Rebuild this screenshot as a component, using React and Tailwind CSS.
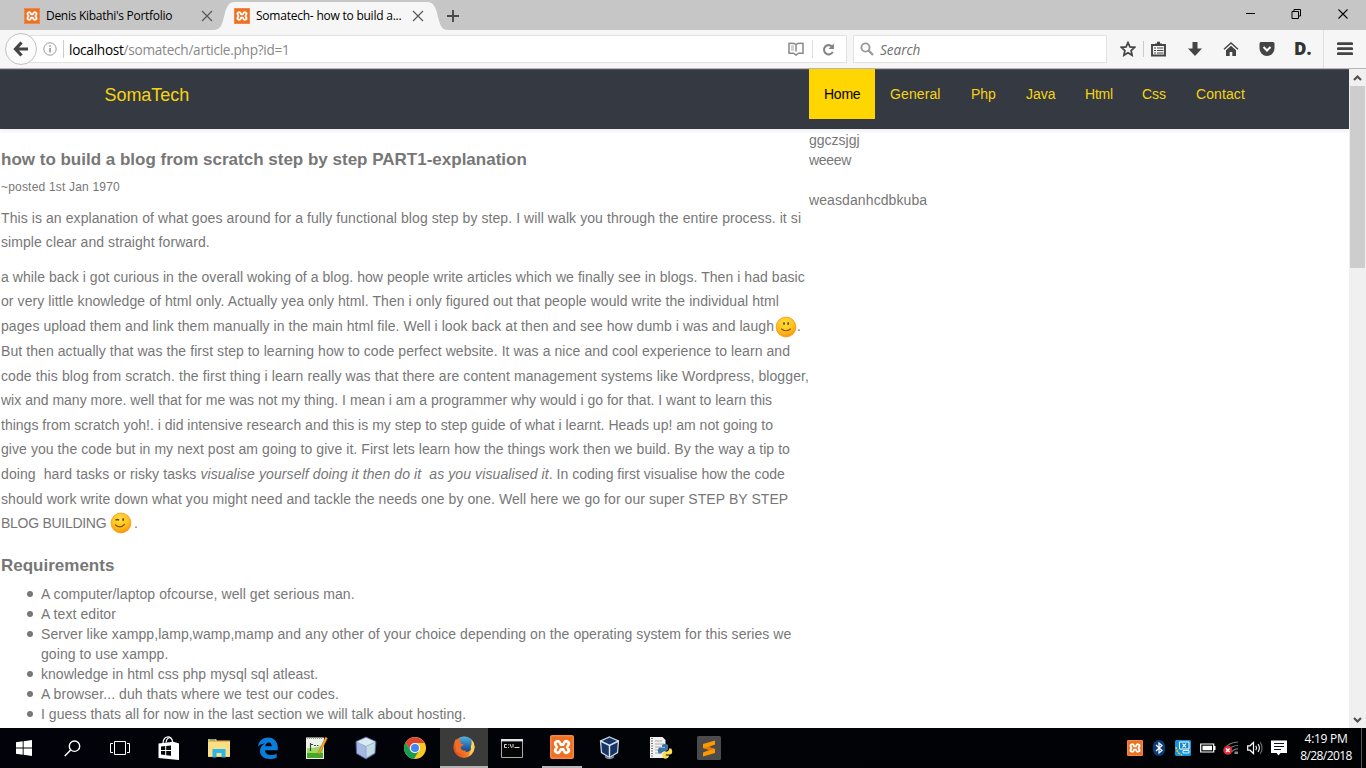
import React from "react";

const PAGE = "font-['Liberation_Sans',Arial,sans-serif]";
const UI = "font-['Open_Sans','Noto_Sans',sans-serif]";

function Xampp({ size = 16 }) {
  return (
    <svg width={size} height={size} viewBox="0 0 24 24" className="shrink-0">
      <rect width="24" height="24" rx="2" fill="#ee7023" />
      <rect x="0.8" y="0.8" width="22.4" height="22.4" rx="1.5" fill="none" stroke="#f59a5c" strokeWidth="0.9" />
      <path
        d="M7.600 8.700L9.500 12L7.600 15.300M16.400 8.700L14.500 12L16.400 15.300M9.500 12h5"
        fill="none"
        stroke="#fff"
        strokeWidth="7.400"
        strokeLinecap="round"
        strokeLinejoin="round"
      />
      <path
        d="M7.700 8.700L9.500 12L7.700 15.300M16.300 8.700L14.500 12L16.300 15.300M9.500 12h5"
        fill="none"
        stroke="#ee7023"
        strokeWidth="2.100"
        strokeLinecap="round"
        strokeLinejoin="round"
      />
    </svg>
  );
}

function TabClose() {
  return (
    <svg width="12" height="12" viewBox="0 0 12 12" className="shrink-0">
      <path d="M1 1l10 10M11 1L1 11" stroke="#5a5a5a" strokeWidth="1.3" />
    </svg>
  );
}

function TabStrip() {
  return (
    <div className={`flex h-[30px] shrink-0 items-center bg-[#c6c6c6] text-[12px] text-black ${UI}`}>
      <div className="flex h-full w-[213px] items-center pt-[2px] pl-[24px]">
        <Xampp />
        <span className="ml-[6px] w-[156px] tracking-[-0.29px] whitespace-nowrap">Denis Kibathi's Portfolio</span>
        <TabClose />
      </div>
      <div className="relative flex h-full w-[235px] items-center pt-[2px] pl-[21px]">
        <svg width="235" height="30" viewBox="0 0 235 30" className="absolute top-0 left-0">
          <path d="M0 30C8 30 9 24 11 17C13 8 15 2 22 2H214C221 2 223 8 225 17C227 24 228 30 235 30Z" fill="#f6f6f6" />
        </svg>
        <div className="relative flex items-center">
          <Xampp />
          <span className="ml-[6px] w-[156px] tracking-[-0.23px] whitespace-nowrap">Somatech- how to build a...</span>
          <TabClose />
        </div>
      </div>
      <svg width="12" height="12" viewBox="0 0 12 12" className="mt-[2px] ml-[-1px]">
        <path d="M6 0v12M0 6h12" stroke="#4a4a4a" strokeWidth="1.900" />
      </svg>
      <div className="mr-[17px] ml-auto flex items-center gap-[36px] pb-[2px]">
        <svg width="10" height="12" viewBox="0 0 10 12">
          <path d="M1 5.500h9" stroke="#000" />
        </svg>
        <svg width="10" height="12" viewBox="0 0 10 12">
          <path d="M3 3.500v-2h6.500v6.500h-2M1 3.500h6.500v7H1z" fill="none" stroke="#000" />
        </svg>
        <svg width="12" height="12" viewBox="0 0 12 12">
          <path d="M1.500 1.500l9 9M10.500 1.500l-9 9" stroke="#000" strokeWidth="1.1" />
        </svg>
      </div>
    </div>
  );
}

function Toolbar() {
  return (
    <div className={`flex h-[39px] shrink-0 items-center border-b border-[#b6b6b8] bg-[#f6f6f6] ${UI}`}>
      <div className="relative ml-[24px] flex h-[28px] w-[823px] shrink-0 items-center border border-[#e2e2e2] bg-white">
        <div className="absolute top-[-3px] left-[-20px] flex h-[32px] w-[32px] items-center justify-center rounded-full border border-[#c3c3c3] bg-[#fbfbfb]">
          <svg width="16" height="16" viewBox="0 0 16 16">
            <path d="M8.500 1.500L2.500 8l6 6.500M3 8h12" fill="none" stroke="#444" strokeWidth="3.200" />
          </svg>
        </div>
        <svg width="14" height="14" viewBox="0 0 14 14" className="ml-[18px]">
          <circle cx="7" cy="7" r="6.200" fill="none" stroke="#999" />
          <path d="M7 6v4.500M7 3.300v1.400" stroke="#888" strokeWidth="1.400" />
        </svg>
        <div className="ml-[6px] h-[18px] w-px bg-[#ccc]" />
        <span className="mt-[2px] ml-[5px] text-[13.6px] tracking-[-0.26px] whitespace-nowrap text-[#888]">
          <span className="text-black">localhost</span>/somatech/article.php?id=1
        </span>
        <svg width="16" height="14" viewBox="0 0 16 14" className="ml-auto">
          <path d="M8 2.500C6 1 3.500 1 1 1.400v9.800h4.500L8 13l2.500-1.800H15V1.400C12.500 1 10 1 8 2.500zM8 2.500V9.500" fill="none" stroke="#888" strokeWidth="1.500" />
          <path d="M3 4h3M3 6h3M3 8h3" stroke="#999" strokeWidth="0.900" />
        </svg>
        <div className="mx-[8px] h-[18px] w-px bg-[#ddd]" />
        <svg width="13" height="13" viewBox="0 0 12 12" className="mr-[11px] ml-px">
          <path d="M9.300 3.300A4.300 4.300 0 1 0 10 8.200" fill="none" stroke="#848484" strokeWidth="1.900" />
          <path d="M11 0.500v5H6z" fill="#848484" />
        </svg>
      </div>
      <div className="ml-[6px] flex h-[28px] w-[254px] shrink-0 items-center border border-[#e2e2e2] bg-white pl-[6px]">
        <svg width="14" height="14" viewBox="0 0 14 14">
          <circle cx="5.500" cy="5.500" r="4.100" fill="none" stroke="#999" strokeWidth="1.900" />
          <path d="M8.500 8.500l4.500 4.500" stroke="#999" strokeWidth="2.300" />
        </svg>
        <span className="mt-[2px] ml-[6px] text-[13.6px] tracking-[-0.05px] text-[#6e6e6e] italic">Search</span>
      </div>
      <div className="ml-[13px] flex items-center">
        <svg width="16" height="16" viewBox="0 0 16 16">
          <path d="M8 1.500l1.900 4.400 4.700.4-3.500 3.200 1 4.800L8 11.800l-4.100 2.500 1-4.800L1.400 6.300l4.700-.4z" fill="none" stroke="#444" strokeWidth="1.700" />
        </svg>
        <div className="mr-[7px] ml-[7px] h-[16px] w-px bg-[#ccc]" />
        <svg width="15" height="16" viewBox="0 0 15 16">
          <path d="M1 4h13v10.500H1z" fill="none" stroke="#444" strokeWidth="1.900" />
          <path d="M4 4V2.500h2V0.800h3v1.700h2V4z" fill="#444" />
          <path d="M3 7h2M6 7h6.500M3 9.500h2M6 9.500h6.500M3 12h2M6 12h6.500" stroke="#444" strokeWidth="1.200" />
        </svg>
        <svg width="14" height="14" viewBox="0 0 14 14" className="ml-[22px]">
          <path d="M4.500 0h5v6.500H14L7 14 0 6.500h4.500z" fill="#444" />
        </svg>
        <svg width="16" height="16" viewBox="0 0 16 16" className="ml-[21px]">
          <path d="M1 8.300L8 2l7 6.300" fill="none" stroke="#444" strokeWidth="1.400" />
          <path d="M3 9.200L8 4.800l5 4.400V15H9.300v-4H6.700v4H3z" fill="#444" />
        </svg>
        <svg width="16" height="14" viewBox="0 0 15 14" className="ml-[20px]">
          <path d="M1.500 0h12A1.500 1.500 0 0 1 15 1.500V6.500a7.500 7.500 0 0 1-15 0V1.500A1.500 1.500 0 0 1 1.500 0z" fill="#444" />
          <path d="M4 5l3.500 3.500L11 5" fill="none" stroke="#fff" strokeWidth="2" />
        </svg>
        <span className="ml-[19px] w-[17px] text-[17px] leading-[16px] font-extrabold text-[#333]">D.</span>
      </div>
      <div className="ml-[12px] h-full w-px bg-[#e0e0e0]" />
      <svg width="16" height="14" viewBox="0 0 16 14" className="ml-[13px]">
        <path d="M1.200 1.700h13.600M1.200 6.700h13.600M1.200 11.700h13.600" stroke="#444" strokeWidth="2.700" strokeLinecap="round" />
      </svg>
    </div>
  );
}

function Smile({ wink = false }) {
  return (
    <svg width="22" height="22" viewBox="0 0 22 22" className="inline-block shrink-0">
      <defs>
        <radialGradient id={wink ? "faceWink" : "faceSmile"} cx="45%" cy="30%" r="70%">
          <stop offset="0" stopColor="#ffde42" />
          <stop offset="0.6" stopColor="#ffc21c" />
          <stop offset="1" stopColor="#f7960a" />
        </radialGradient>
      </defs>
      <circle cx="11" cy="11" r="9.900" fill={wink ? "url(#faceWink)" : "url(#faceSmile)"} stroke="#f99c1c" strokeWidth="0.900" />
      {wink ? (
        <path d="M5.500 8.300q1.800-1.600 3.600 0" fill="none" stroke="#6b4208" strokeWidth="1.300" />
      ) : (
        <ellipse cx="9" cy="7.500" rx="0.900" ry="1.600" fill="#6b4208" />
      )}
      <ellipse cx="13.200" cy="7.500" rx="0.900" ry="1.600" fill="#6b4208" />
      <path d={wink ? "M5.500 13q4.500 4 9-0.500" : "M6.500 13q4.500 3.500 9 0"} fill="none" stroke="#8a5208" strokeWidth="1.200" strokeLinecap="round" />
    </svg>
  );
}

const links = [
  ["Home", "w-[66px] bg-[#ffd600] text-black tracking-[-0.25px]"],
  ["General", "w-[81px] tracking-[0.1px]"],
  ["Php", "w-[55px]"],
  ["Java", "w-[59px]"],
  ["Html", "w-[57px] tracking-[-0.2px]"],
  ["Css", "w-[54px]"],
  ["Contact", "w-[80px] tracking-[0.1px]"],
];

function SiteNav() {
  return (
    <nav className="relative flex h-[60px] shrink-0 border-t border-[#50545a] bg-[#353941] text-[#f5d413] shadow-[0_3px_3px_#f3f3f3]">
      <div className="w-[809px] pt-[15px] pl-[104.500px] text-[18px] leading-[20px] tracking-[-0.05px]">SomaTech</div>
      <div className="-mt-px flex text-[14px] leading-[50px]">
        {links.map(([label, cls]) => (
          <a key={label} className={`block h-[50px] pl-[15px] whitespace-nowrap ${cls}`}>
            {label}
          </a>
        ))}
      </div>
    </nav>
  );
}

function Line({ children, track = "" }) {
  return <span className={`block h-[24.600px] whitespace-pre ${track}`}>{children}</span>;
}

function Item({ children, track = "" }) {
  return (
    <li className={`flex before:mt-[7px] before:mr-[8px] before:block before:h-[6px] before:w-[6px] before:shrink-0 before:rounded-full before:bg-[#777] ${track}`}>
      <span>{children}</span>
    </li>
  );
}

function Article() {
  return (
    <article className="w-[809px] shrink-0 pl-px">
      <h2 className="mt-[21px] text-[17px] leading-[20px] font-bold">how to build a blog from scratch step by step PART1-explanation</h2>
      <p className="mt-[7px] text-[12px] leading-[20px] tracking-[0.19px]">~posted 1st Jan 1970</p>
      <p className="mt-[8.700px] leading-[24.600px]">
        <Line track="tracking-[0.082px]">This is an explanation of what goes around for a fully functional blog step by step. I will walk you through the entire process. it si</Line>
        <Line track="tracking-[0.075px]">simple clear and straight forward.</Line>
      </p>
      <p className="mt-[9.900px] leading-[24.600px]">
        <Line track="tracking-[0.06px]">a while back i got curious in the overall woking of a blog. how people write articles which we finally see in blogs. Then i had basic</Line>
        <Line track="tracking-[0.074px]">or very little knowledge of html only. Actually yea only html. Then i only figured out that people would write the individual html</Line>
        <Line track="tracking-[0.062px]">
          pages upload them and link them manually in the main html file. Well i look back at then and see how dumb i was and laugh
          <span className="ml-px inline-flex h-[22px] align-[-7px]"><Smile /></span>.
        </Line>
        <Line track="tracking-[0.078px]">But then actually that was the first step to learning how to code perfect website. It was a nice and cool experience to learn and</Line>
      </p>
      <p className="mt-[0.400px] leading-[24.500px]">
        <Line track="tracking-[0.1px]">code this blog from scratch. the first thing i learn really was that there are content management systems like Wordpress, blogger,</Line>
        <Line track="tracking-[0.006px]">wix and many more. well that for me was not my thing. I mean i am a programmer why would i go for that. I want to learn this</Line>
        <Line track="tracking-[0.012px]">things from scratch yoh!. i did intensive research and this is my step to step guide of what i learnt. Heads up! am not going to</Line>
        <Line track="tracking-[0.065px]">give you the code but in my next post am going to give it. First lets learn how the things work then we build. By the way a tip to</Line>
        <Line track="tracking-[0.1px]">
          {"doing  hard tasks or risky tasks "}
          <em>{"visualise yourself doing it then do it  as you visualised it"}</em>
          <span className="tracking-[0.005px]">{". In coding first visualise how the code"}</span>
        </Line>
        <Line track="tracking-[0.07px]">should work write down what you might need and tackle the needs one by one. Well here we go for our super STEP BY STEP</Line>
        <Line track="tracking-[-0.28px]">
          {"BLOG BUILDING "}
          <span className="mr-[2px] inline-flex h-[22px] align-[-6px]"><Smile wink /></span>.
        </Line>
      </p>
      <h2 className="mt-[20px] text-[17px] leading-[20px] font-bold">Requirements</h2>
      <ul className="mt-[8px] pl-[26px] leading-[20px] whitespace-nowrap">
        <Item track="tracking-[0.08px]">A computer/laptop ofcourse, well get serious man.</Item>
        <Item track="tracking-[0.08px]">A text editor</Item>
        <Item track="tracking-[0.07px]">
          Server like xampp,lamp,wamp,mamp and any other of your choice depending on the operating system for this series we
          <br />
          going to use xampp.
        </Item>
        <Item track="tracking-[0.04px]">knowledge in html css php mysql sql atleast.</Item>
        <Item track="tracking-[0.08px]">A browser... duh thats where we test our codes.</Item>
        <Item track="tracking-[0.045px]">I guess thats all for now in the last section we will talk about hosting.</Item>
      </ul>
    </article>
  );
}

function Scrollbar() {
  return (
    <div className="flex w-[17px] shrink-0 flex-col items-center bg-[#f0f0f0]">
      <svg width="17" height="17" viewBox="0 0 17 17" className="shrink-0">
        <path d="M5 11L8.500 7.500l3.500 3.500" fill="none" stroke="#505050" strokeWidth="2.200" />
      </svg>
      <div className="h-[182px] w-[15px] bg-[#cdcdcd]" />
      <svg width="17" height="17" viewBox="0 0 17 17" className="mt-auto">
        <path d="M5 7L8.500 10.500l3.500-3.500" fill="none" stroke="#505050" strokeWidth="2.200" />
      </svg>
    </div>
  );
}

function Slot({ children, w = "w-[49px]" }) {
  return <div className={`flex h-full shrink-0 items-center justify-center ${w}`}>{children}</div>;
}

function Taskbar() {
  return (
    <div className={`flex h-[40px] shrink-0 bg-linear-to-r from-[#02030a] via-[#020307] to-[#010204] text-white ${UI}`}>
      <Slot w="w-[48px]">
        <svg width="16" height="16" viewBox="0 0 16 16">
          <path d="M0 2.300L6.700 1.300v6.300H0zM7.600 1.200L16 0v7.600H7.600zM0 8.500h6.700v6.200L0 13.800zM7.600 8.500H16V16l-8.400-1.200z" fill="#fff" />
        </svg>
      </Slot>
      <Slot w="w-[48px]">
        <svg width="17" height="17" viewBox="0 0 17 17">
          <circle cx="10.500" cy="6.200" r="5.200" fill="none" stroke="#fff" strokeWidth="1.400" />
          <path d="M6.700 10L0.700 16" stroke="#fff" strokeWidth="1.500" />
        </svg>
      </Slot>
      <Slot w="w-[48px]">
        <svg width="20" height="14" viewBox="0 0 20 14">
          <path d="M4.500 0.500h11v13h-11zM3 2.500H0.500v9H3M17 2.500h2.500v9H17" fill="none" stroke="#fff" />
        </svg>
      </Slot>
      <Slot w="w-[50px]">
        <svg width="22" height="24" viewBox="0 0 22 24">
          <path d="M0.500 7.500l15-1.800 5.500 1.800V24L15.500 23.500 0.500 22z" fill="#fff" />
          <path d="M5 7.200C5 2.500 8 0.800 10 0.800s4.500 1.500 4.500 5.200M8 6.500C8.500 2.500 11 1 12.500 2c1.800 1.200 2 2.500 2 4" fill="none" stroke="#fff" strokeWidth="1.200" />
          <path d="M3 10.500l4.200-.4v3.900H3zM8.200 10l4.800-.5V14H8.200zM3 15h4.200v4L3 18.500zM8.200 15H13v4.700l-4.800-.5z" fill="#05070c" />
        </svg>
      </Slot>
      <Slot>
        <svg width="22" height="20" viewBox="0 0 22 20">
          <path d="M0 1h8l1 1.500h13v16.500H0z" fill="#e9b949" />
          <path d="M0 4h22v14.500H0z" fill="#fbdf86" />
          <path d="M2 1.200h5v1.300H2z" fill="#3b9ad9" />
          <path d="M4.500 11h13v8.500h-4V15h-5v4.500h-4z" fill="#29b6ea" />
        </svg>
      </Slot>
      <Slot>
        <svg width="20" height="22" viewBox="0 0 20 22">
          <path d="M0 9.500C.7 4 4.500.5 10 .5c6.200 0 9.800 4.500 9.800 10v2.700H7c.2 3.500 3 4.800 6 4.800 2.200 0 4.200-.6 5.700-1.600v4.100c-1.700 1-4 1.500-6.700 1.500C5.500 22 2 18.500 2 14c0-3.300 1.800-6.200 5-7.500C4.500 6.500 2 7.500 0 9.500zm7.200-.2h6.600c0-2.500-1.300-3.800-3.200-3.800-1.800 0-3 1.500-3.400 3.800z" fill="#0a7ddb" />
        </svg>
      </Slot>
      <Slot>
        <svg width="23" height="24" viewBox="0 0 23 24">
          <path d="M1 1.500h18v21.500H1z" fill="#eef3e8" />
          <path d="M2 12q8 1 16-3v13H2z" fill="#9ed860" />
          <path d="M2 17h16v5H2z" fill="#46a827" />
          <path d="M2 2.200h16" stroke="#999" strokeWidth="1.500" strokeDasharray="1 1" />
          <path d="M5.500 7v8M5.500 8.500h2.500M9 9.500h2M12 9.500h1.500" fill="none" stroke="#444" strokeWidth="1.200" />
          <path d="M20.500 1l2 1.300-7.500 15-2 1.500.300-2.600z" fill="#f3a92c" stroke="#a65d1e" strokeWidth="0.500" />
        </svg>
      </Slot>
      <Slot>
        <svg width="22" height="24" viewBox="0 0 22 24">
          <path d="M11 1l10 4.500-1 12L11 23 1.500 17.500 1 5.500z" fill="#8fa9d0" stroke="#5663a0" strokeWidth="0.800" />
          <path d="M11 1.800L20 5.700 11 10 2 5.700z" fill="#d9ecf0" />
          <path d="M2 6.500l8.500 4v11L2.500 17z" fill="#a6b9e3" />
          <path d="M20 6.500l-8.500 4v11l7.800-4.800z" fill="#c2dde0" />
        </svg>
      </Slot>
      <Slot>
        <svg width="22" height="22" viewBox="0 0 22 22">
          <circle cx="11" cy="11" r="11" fill="#fbc81e" />
          <path d="M1.500 5.500A11 11 0 0 1 20.500 6H11a5 5 0 0 0-4.600 7z" fill="#dd4437" />
          <path d="M1.500 5.500A11 11 0 0 0 10 22l5-8.500a5 5 0 0 1-8.600 0z" fill="#179c58" />
          <circle cx="11" cy="11" r="5.100" fill="#fff" />
          <circle cx="11" cy="11" r="4" fill="#4285f4" />
        </svg>
      </Slot>
      <div className="ml-px flex h-full w-[48px] shrink-0 items-center justify-center border-b-2 border-[#b5b5b5] bg-[#3b3b3b]">
        <svg width="22" height="22" viewBox="0 0 22 22">
          <defs>
            <linearGradient id="foxTail" x1="0" y1="0.700" x2="1" y2="0.300">
              <stop offset="0" stopColor="#e2491b" />
              <stop offset="0.600" stopColor="#f5872a" />
              <stop offset="1" stopColor="#ffd95a" />
            </linearGradient>
            <linearGradient id="foxGlobe" x1="0.500" y1="0" x2="0.500" y2="1">
              <stop offset="0" stopColor="#4fb3e2" />
              <stop offset="1" stopColor="#143f86" />
            </linearGradient>
          </defs>
          <circle cx="11" cy="11.300" r="10.600" fill="url(#foxTail)" />
          <path d="M7 1.500c4-2 9-.800 11.500 2.500 1.500 4 1 8.500-2 11-3 2-7 1-8.500-1.500L5 7z" fill="url(#foxGlobe)" />
          <path d="M1.500 6C2 4.500 2.500 3.500 3.500 2.500c0 1.200.300 2 1 2.500 1-.600 2-.700 3.200-.300-.600.900-.700 1.900 0 2.800 1.200.400 2.300.300 2.800.900-.500 1.600-2.500 1.500-3 3 .500 2.500 3 3.700 6 3l-3 3.500-7-2z" fill="#ef6f26" />
          <path d="M18.500 3.500c3.500 4 3.600 8.500 1.700 12-1.200 2-2.700 3.500-4.700 4.700 2.500-4.200 2.700-7 2.300-9.500.9-2.500 1.200-5 .7-7.200z" fill="#ffd052" />
        </svg>
      </div>
      <Slot w="w-[48px]">
        <svg width="22" height="19" viewBox="0 0 22 19">
          <path d="M0.500 0.500h21v18h-21z" fill="#050505" stroke="#aaa" />
          <path d="M0 1.200h22" stroke="#dfe6ea" strokeWidth="2.400" />
          <path d="M5.800 5.500H3.500V8.500h2.300M7.500 5.500v.8M7.500 8v.8M9 5l1.500 3.800M12 5v3.500M13.500 8.500h5" fill="none" stroke="#ddd" strokeWidth="1" />
        </svg>
      </Slot>
      <div className="ml-px flex h-full w-[49px] justify-center">
        <div className="flex w-[40px] items-center justify-center border-b-2 border-[#b5b5b5]">
          <Xampp size={24} />
        </div>
      </div>
      <Slot w="w-[47px]">
        <svg width="21" height="24" viewBox="0 0 21 24">
          <path d="M10.500 1l9 4-1 11.500-8 5-8-5L1.500 5z" fill="#163564" stroke="#c9d6e6" strokeWidth="1.300" />
          <path d="M1.500 5l9 4.500 9-4.500M10.500 9.500v11.500" fill="none" stroke="#dfe8f2" strokeWidth="1.400" />
          <path d="M6 20.500q4.500 4 9 0" fill="none" stroke="#8194b4" strokeWidth="1.500" />
        </svg>
      </Slot>
      <Slot w="w-[55px]">
        <svg width="24" height="24" viewBox="0 0 24 24">
          <path d="M1 1h12.500l3 3v18H1z" fill="#f1f1f1" />
          <path d="M3 2v20" stroke="#777" strokeWidth="2" strokeDasharray="1 1.500" />
          <path d="M6 5h7M6 8h9M6 11h6M6 14h5M6 17h5" stroke="#aaa" />
          <path d="M13 9.500c0-2 6-2 6 0v4c0 2-6 1-6.500 4H10c-2-2-1-6 1-6h5v-.5h-3z" fill="#3874a8" />
          <path d="M20 12.500h2c2 2 1.500 6-1 6h-4.500v1H20c0 4-6.500 4-6.500 1v-3c.5-2.500 6-1 6.500-4z" fill="#ffdc4e" />
        </svg>
      </Slot>
      <Slot w="w-[42px]">
        <svg width="24" height="24" viewBox="0 0 24 24">
          <rect width="24" height="24" rx="1.500" fill="#4b4b4b" />
          <path d="M18 4.500v4L11.500 11l6.500 2v4L6 20.500v-4L12.500 14 6 12V8z" fill="#ff9800" />
          <path d="M6 12l6.500 2 5.500-1-6.500-2z" fill="#e07a00" />
        </svg>
      </Slot>

      <div className="ml-auto flex h-full items-center">
        <Xampp size={16} />
        <svg width="12" height="16" viewBox="0 0 12 16" className="ml-[10px]">
          <rect width="12" height="16" rx="6" fill="#0a3c7d" />
          <path d="M3 5l6 5.500L6 13V3l3 2.500L3 11" fill="none" stroke="#fff" strokeWidth="1.200" />
        </svg>
        <svg width="16" height="16" viewBox="0 0 16 16" className="ml-[10px]">
          <rect width="16" height="16" rx="1.500" fill="#1296db" />
          <path d="M4.500 2h9.500v7H4.500z" fill="#1186cc" stroke="#fff" />
          <path d="M7.500 3.700l3.500 3.600M11 3.700L7.500 7.300" stroke="#fff" strokeWidth="1.200" />
          <path d="M8 10.500h6v2.500H8z" fill="none" stroke="#e5f5ff" />
          <path d="M1 7q1 6.500 6 8" fill="none" stroke="#f2c84b" strokeWidth="1.500" strokeDasharray="2 1" />
        </svg>
        <svg width="16" height="10" viewBox="0 0 16 10" className="ml-[9px]">
          <path d="M0.700 1h13v8H0.700z" fill="none" stroke="#fff" strokeWidth="1.200" />
          <path d="M2.500 2.800H12v4.400H2.500zM14 3h1.500v4H14z" fill="#fff" />
        </svg>
        <svg width="16" height="14" viewBox="0 0 16 14" className="ml-[7px]">
          <path d="M2 7Q6 1.500 15 1M5.500 9Q8.500 4.800 15 4.500M8.500 11Q10.500 8 15 7.800" fill="none" stroke="#777" strokeWidth="1.200" />
          <path d="M11.500 10.500H15V13h-3.500z" fill="#888" />
          <circle cx="4.800" cy="9.300" r="4.500" fill="#e02b36" />
          <path d="M3 7.500l3.600 3.600M6.600 7.500L3 11.100" stroke="#fff" strokeWidth="1.400" />
        </svg>
        <svg width="16" height="14" viewBox="0 0 16 14" className="ml-[8px]">
          <path d="M0.700 4.800H3L6.500 1.500v11L3 9.200H0.700z" fill="none" stroke="#fff" strokeWidth="1.200" />
          <path d="M8.800 4.800q1.500 2.200 0 4.400M11 3q2.800 4 0 8" fill="none" stroke="#fff" strokeWidth="1.100" />
          <path d="M13.300 1.300q3.500 5.700 0 11.400" fill="none" stroke="#777" strokeWidth="1.100" />
        </svg>
        <svg width="16" height="16" viewBox="0 0 16 16" className="ml-[8px]">
          <path d="M0 0.500h16v12.500H9.500L7.500 15.500 5.500 13H0z" fill="#fff" />
          <path d="M3 3.500h10M3 6.500h10M3 9.500h7" stroke="#111" strokeWidth="1.200" />
        </svg>
        <div className="ml-[11px] flex w-[56px] -translate-y-px flex-col items-center text-[12px] leading-[17px] whitespace-nowrap">
          <span className="tracking-[-0.3px]">4:19 PM</span>
          <span className="tracking-[-0.6px]">8/28/2018</span>
        </div>
        <div className="mr-[4px] ml-[7px] h-[40px] w-px bg-[#555]" />
      </div>
    </div>
  );
}

export default function App() {
  return (
    <div className="flex h-[768px] w-[1366px] flex-col overflow-hidden bg-white">
      <TabStrip />
      <Toolbar />
      <div className="flex min-h-0 flex-1">
        <main className={`flex w-[1349px] flex-col overflow-hidden text-[14px] text-[#777] ${PAGE}`}>
          <SiteNav />
          <div className="flex min-h-0 flex-1">
            <Article />
            <aside className="pt-[1px] leading-[20px]">
              <p>ggczsjgj</p>
              <p className="tracking-[-0.3px]">weeew</p>
              <p className="mt-[20px] tracking-[0.1px]">weasdanhcdbkuba</p>
            </aside>
          </div>
        </main>
        <Scrollbar />
      </div>
      <Taskbar />
    </div>
  );
}
